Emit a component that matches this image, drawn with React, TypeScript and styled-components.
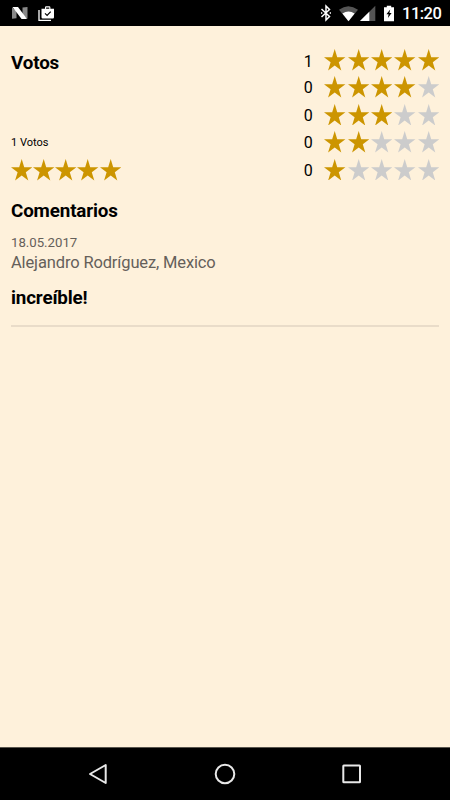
import React from "react";
import styled, { createGlobalStyle } from "styled-components";

const GlobalStyle = createGlobalStyle`
  * { box-sizing: border-box; }
  body { margin: 0; background: #fef1db; }
`;

const Screen = styled.div`
  width: 450px;
  height: 800px;
  display: flex;
  flex-direction: column;
  overflow: hidden;
  background: #fef1db;
  color: #000;
  font-family: Roboto, "Liberation Sans", sans-serif;
`;

const StatusBar = styled.header`
  height: 26px;
  flex: none;
  display: flex;
  align-items: center;
  padding: 0 9px 0 11px;
  background: #000;
  color: #fff;
`;

const StatusIcon = styled.svg<{ $gap?: number }>`
  display: block;
  flex: none;
  margin-right: ${(p) => p.$gap ?? 0}px;
`;

const StatusSpacer = styled.div`
  flex: 1;
`;

const Clock = styled.span`
  font-size: 16.5px;
  line-height: 20px;
  font-weight: 500;
  letter-spacing: -0.5px;
  width: 39px;
  white-space: nowrap;
  padding-top: 1px;
`;

const Content = styled.main`
  flex: 1;
  padding: 21px 11px 0;
`;

const Summary = styled.section`
  display: flex;
  justify-content: space-between;
  height: 138px;
`;

const Overall = styled.div`
  display: flex;
  flex-direction: column;
`;

const Heading = styled.h2`
  margin: 0;
  padding-top: 1px;
  font-size: 18.8px;
  line-height: 30px;
  font-weight: 700;
  letter-spacing: -0.14px;
`;

const VoteCount = styled.div`
  margin-top: 58px;
  font-size: 11px;
  line-height: 14px;
`;

const OverallStars = styled.div`
  margin-top: 9px;
`;

const Breakdown = styled.div`
  padding-top: 2px;
`;

const Count = styled.span`
  width: 9px;
  font-size: 16px;
  line-height: 24px;
  text-align: center;
`;

const BreakdownRow = styled.div`
  display: flex;
  height: 27.45px;
  gap: 11.5px;

  &:first-child ${Count} {
    line-height: 26px;
  }
`;

const Stars = styled.div<{ $gap: number }>`
  display: flex;
  gap: ${(p) => p.$gap}px;
`;

const StarShape = styled.svg<{ $filled: boolean }>`
  display: block;
  width: 21.4px;
  height: 21.6px;
  fill: ${(p) => (p.$filled ? "#cc9500" : "#cccccc")};
`;

const Comments = styled.section`
  padding-top: 10px;
`;

const Comment = styled.article`
  padding-top: 9px;
  height: 101px;
  border-bottom: 2px solid #e9dcc9;
`;

const CommentDate = styled.div`
  font-size: 13.2px;
  line-height: 16px;
  color: #65605a;
`;

const Author = styled.div`
  margin-top: 1px;
  font-size: 16.5px;
  line-height: 22px;
  letter-spacing: -0.14px;
  color: #65605a;
`;

const CommentText = styled.p`
  margin: 11px 0 0;
  font-size: 18.8px;
  line-height: 26px;
  font-weight: 700;
  letter-spacing: -0.15px;
`;

const NavBar = styled.nav`
  height: 53px;
  flex: none;
  display: flex;
  justify-content: space-between;
  align-items: center;
  padding: 0 86px;
  border-top: 1px solid #59554d;
  background: #000;
`;

const NavIcon = styled.svg`
  display: block;
  width: 24px;
  height: 24px;
  fill: none;
  stroke: #e8e8e8;
  stroke-width: 2;
  stroke-linejoin: round;
`;

function Star({ filled }: { filled: boolean }) {
  return (
    <StarShape $filled={filled} viewBox="2.4 0 95.2 90.5" preserveAspectRatio="none">
      <path d="M50 0L61.2 34.5H97.6L68.2 56L79.4 90.5L50 69.1L20.6 90.5L31.8 56L2.4 34.5H38.8Z" />
    </StarShape>
  );
}

function Rating({ value, gap }: { value: number; gap: number }) {
  return (
    <Stars $gap={gap}>
      {[1, 2, 3, 4, 5].map((n) => (
        <Star key={n} filled={n <= value} />
      ))}
    </Stars>
  );
}

const votes = [
  { stars: 5, count: 1 },
  { stars: 4, count: 0 },
  { stars: 3, count: 0 },
  { stars: 2, count: 0 },
  { stars: 1, count: 0 },
];

export default function App() {
  return (
    <>
      <GlobalStyle />
      <Screen>
        <StatusBar>
          <StatusIcon width="17" height="14" viewBox="0 0 17 14" $gap={10}>
            <path d="M1 1.5L5.5 5V12.3L1 12.8Z" fill="#888" />
            <path d="M11.5 1.5L16.5 1V12.8L11.5 9.3Z" fill="#888" />
            <path d="M1.5 1H7L16 13H10.6Z" fill="#fff" />
          </StatusIcon>
          <StatusIcon width="17" height="17" viewBox="0 0 17 17">
            <path d="M1 5V15.4H13" fill="none" stroke="#fff" strokeWidth="1.3" />
            <path d="M3.5 3.7H7V2.4Q7 1.3 8.1 1.3H11.3Q12.4 1.3 12.4 2.4V3.7H16V12.2Q16 13.4 14.8 13.4H4.7Q3.5 13.4 3.5 12.2ZM8.1 3.7H11.3V2.4H8.1Z" fill="#fff" fillRule="evenodd" />
            <path d="M7 8.4L9.1 10.4L12.7 6.6" fill="none" stroke="#000" strokeWidth="1.2" />
          </StatusIcon>
          <StatusSpacer />
          <StatusIcon width="12" height="18" viewBox="0 0 12 18" $gap={6}>
            <path d="M1.5 5L9.5 12.5L6 16V2L9.5 5.5L1.5 13M1 9H2.3M9.7 9H11" fill="none" stroke="#fff" strokeWidth="1.5" />
          </StatusIcon>
          <StatusIcon width="21" height="17" viewBox="0 0 21 17" $gap={1}>
            <path d="M1 4.7Q10.3-2.3 20 4.7L10.5 16.3Z" fill="#555" />
            <path d="M4.4 8.5Q10.5 4.4 16.6 8.5L10.5 16.3Z" fill="#fff" />
          </StatusIcon>
          <StatusIcon width="16" height="16" viewBox="0 0 16 16" $gap={8.5}>
            <path d="M0 16L15.3 0.7V16Z" fill="#555" />
            <path d="M0 16L9.3 6.7V16Z" fill="#fff" />
          </StatusIcon>
          <StatusIcon width="10" height="17" viewBox="0 0 10 17" $gap={8}>
            <path d="M0 2.2H2.8V0.7H7.2V2.2H10V16.3H0Z" fill="#fff" />
            <path d="M6.2 4.4L2.4 9.3H4.6L3.9 13L7.6 8H5.4Z" fill="#000" />
          </StatusIcon>
          <Clock>11:20</Clock>
        </StatusBar>
        <Content>
          <Summary>
            <Overall>
              <Heading>Votos</Heading>
              <VoteCount>1 Votos</VoteCount>
              <OverallStars>
                <Rating value={5} gap={0.75} />
              </OverallStars>
            </Overall>
            <Breakdown>
              {votes.map((v) => (
                <BreakdownRow key={v.stars}>
                  <Count>{v.count}</Count>
                  <Rating value={v.stars} gap={1.95} />
                </BreakdownRow>
              ))}
            </Breakdown>
          </Summary>
          <Comments>
            <Heading>Comentarios</Heading>
            <Comment>
              <CommentDate>18.05.2017</CommentDate>
              <Author>Alejandro Rodríguez, Mexico</Author>
              <CommentText>increíble!</CommentText>
            </Comment>
          </Comments>
        </Content>
        <NavBar>
          <NavIcon viewBox="0 0 24 24">
            <path d="M19.7 3V21L4 12Z" />
          </NavIcon>
          <NavIcon viewBox="0 0 24 24">
            <circle cx="12" cy="12" r="9.3" />
          </NavIcon>
          <NavIcon viewBox="0 0 24 24">
            <rect x="3.3" y="3.6" width="16.7" height="16.7" rx="0.5" />
          </NavIcon>
        </NavBar>
      </Screen>
    </>
  );
}
